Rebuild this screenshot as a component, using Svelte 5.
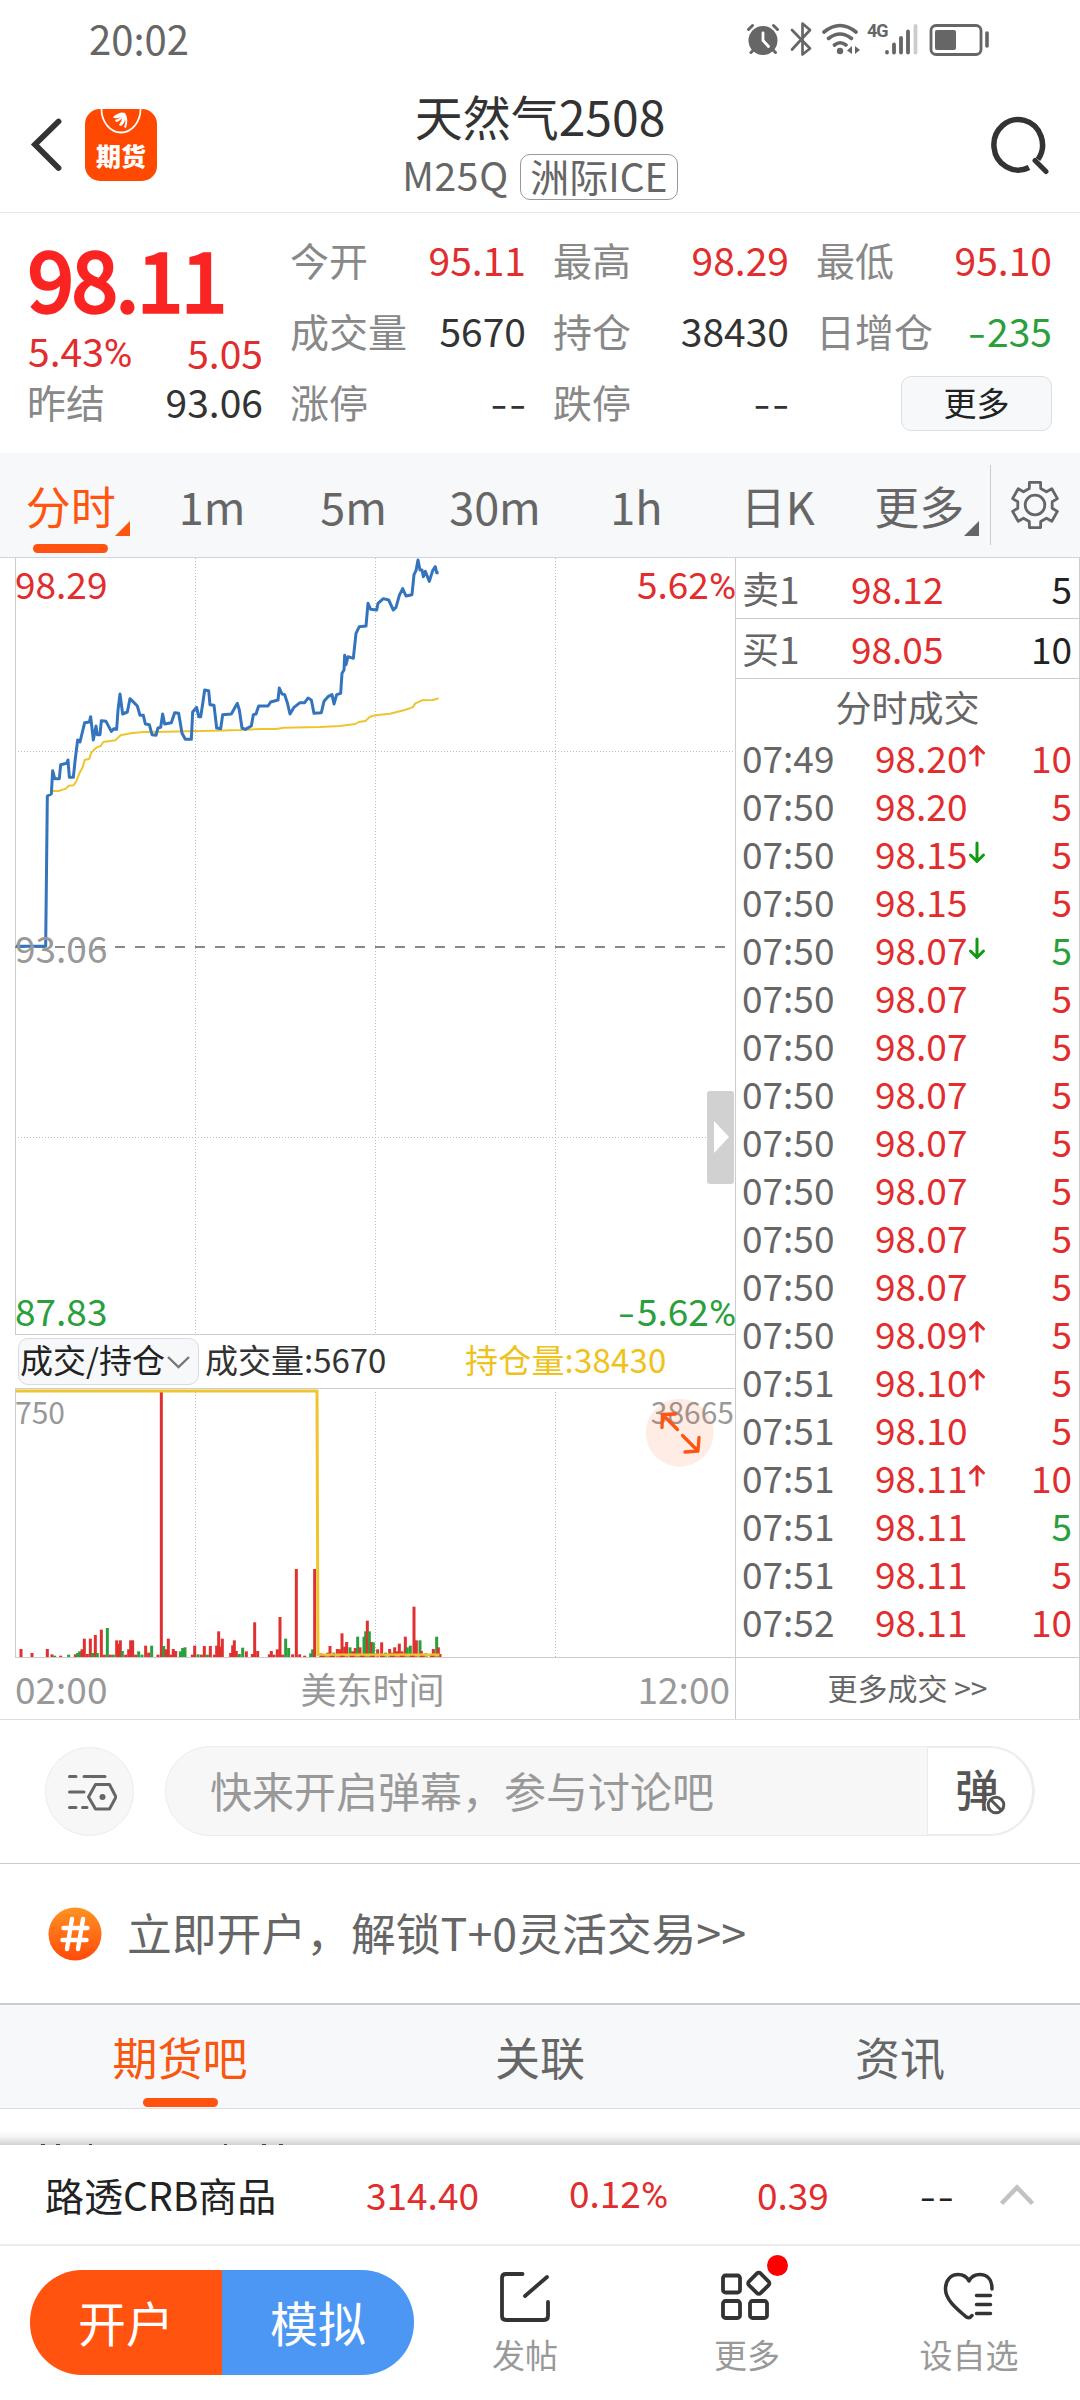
<script>
  const stats = [
    [
      { label: '今开', value: '95.11', tone: 'red' },
      { label: '成交量', value: '5670', tone: 'dark' },
      { label: '涨停', value: '--', tone: 'dark' }
    ],
    [
      { label: '最高', value: '98.29', tone: 'red' },
      { label: '持仓', value: '38430', tone: 'dark' },
      { label: '跌停', value: '--', tone: 'dark' }
    ],
    [
      { label: '最低', value: '95.10', tone: 'red' },
      { label: '日增仓', value: '235', negative: true, tone: 'green' }
    ]
  ];

  const periods = [
    { name: '分时', active: true, corner: true },
    { name: '1m' },
    { name: '5m' },
    { name: '30m' },
    { name: '1h' },
    { name: '日K' },
    { name: '更多', corner: true }
  ];

  const quotes = [
    { side: '卖1', price: '98.12', qty: '5' },
    { side: '买1', price: '98.05', qty: '10' }
  ];

  const trades = [
    ['07:49', '98.20', 'up', '10', 'red'],
    ['07:50', '98.20', '', '5', 'red'],
    ['07:50', '98.15', 'down', '5', 'red'],
    ['07:50', '98.15', '', '5', 'red'],
    ['07:50', '98.07', 'down', '5', 'green'],
    ['07:50', '98.07', '', '5', 'red'],
    ['07:50', '98.07', '', '5', 'red'],
    ['07:50', '98.07', '', '5', 'red'],
    ['07:50', '98.07', '', '5', 'red'],
    ['07:50', '98.07', '', '5', 'red'],
    ['07:50', '98.07', '', '5', 'red'],
    ['07:50', '98.07', '', '5', 'red'],
    ['07:50', '98.09', 'up', '5', 'red'],
    ['07:51', '98.10', 'up', '5', 'red'],
    ['07:51', '98.10', '', '5', 'red'],
    ['07:51', '98.11', 'up', '10', 'red'],
    ['07:51', '98.11', '', '5', 'green'],
    ['07:51', '98.11', '', '5', 'red'],
    ['07:52', '98.11', '', '10', 'red']
  ];

  // Chart series are kept in thirds of a pixel and scaled down in the SVG.
  const priceLine =
    '48,1219 137,1219 142,768 154,762 158,692 164,716 178,716 182,674 200,670 204,660 208,712 220,712 226,655 233,600 240,606 254,548 268,546 272,530 280,600 288,558 292,584 300,584 304,542 318,544 334,574 342,566 350,568 354,510 360,462 368,522 382,516 390,476 402,488 412,498 420,526 430,526 436,552 448,554 456,584 468,586 474,564 482,562 488,522 494,552 514,548 524,518 536,520 546,580 556,598 574,598 578,516 590,502 596,530 602,530 608,492 614,450 626,452 630,494 642,496 650,564 662,566 668,524 694,522 712,490 718,510 726,564 736,568 754,558 760,524 768,522 776,498 804,498 812,486 834,480 838,444 846,462 854,464 862,488 870,522 882,502 900,488 914,488 924,474 934,480 942,520 964,518 972,484 984,470 996,464 1002,492 1010,464 1022,460 1026,400 1032,390 1034,346 1038,374 1044,350 1060,355 1068,280 1078,260 1098,258 1104,190 1112,208 1130,210 1134,190 1150,176 1166,180 1180,210 1188,202 1198,166 1208,146 1218,168 1236,164 1242,104 1248,92 1254,60 1260,90 1266,90 1270,110 1276,94 1288,124 1298,92 1306,80 1310,98 1316,98';
  const averageLine =
    '158,753 176,753 198,746 206,737 220,736 228,726 238,700 248,682 254,660 268,656 274,638 290,622 302,618 310,606 346,601 362,586 392,580 430,576 500,575 560,574 640,572 720,570 780,567 830,567 850,563 960,561 1020,558 1066,552 1076,546 1096,543 1110,530 1126,526 1170,521 1214,510 1238,502 1246,490 1266,481 1298,480 1316,475';

  // [x, top of bar, colour]
  const G = '#2a9f3c';
  const R = '#e03030';
  const volumes = [
    [63, 1107, R], [96, 1119, R], [142, 1107, R], [156, 1123, R], [164, 1127, G], [182, 1127, R], [206, 1124, G],
    [226, 1123, R], [233, 1119, G], [239, 1114, G], [246, 1108, R], [253, 1076, R], [262, 1122, R], [271, 1076, R], [278, 1119, G],
    [286, 1065, R], [292, 1119, G], [304, 1049, R], [313, 1124, R], [322, 1044, G], [331, 1124, R], [340, 1124, G], [350, 1081, R],
    [356, 1092, R], [361, 1081, R], [367, 1113, G], [377, 1124, R], [386, 1108, R], [392, 1081, R], [398, 1081, R], [407, 1124, R],
    [416, 1114, G], [426, 1124, G], [437, 1097, R], [446, 1118, R], [455, 1097, G], [474, 1124, R], [484, 336, R], [491, 1098, G],
    [498, 1108, R], [505, 1076, R], [513, 1124, R], [520, 1107, R], [527, 1113, R], [541, 1114, G], [548, 1104, G], [555, 1102, G],
    [577, 1124, R], [584, 1097, R], [594, 1123, G], [604, 1124, R], [613, 1098, R], [622, 1124, G], [631, 1098, R], [643, 1124, R],
    [650, 1097, R], [656, 1054, R], [662, 1100, R], [667, 1076, R], [692, 1119, R], [698, 1096, R], [703, 1081, R], [709, 1113, R],
    [718, 1122, G], [728, 1103, G], [739, 1114, R], [757, 1122, R], [764, 1027, R], [773, 1113, R], [808, 1123, R], [814, 1113, R],
    [822, 1124, R], [832, 1108, R], [840, 1011, R], [848, 1124, R], [857, 1076, G], [866, 1104, G], [878, 1123, R], [889, 867, R],
    [899, 1123, R], [914, 1127, R], [932, 1120, G], [938, 1108, G], [944, 867, R], [962, 1120, R], [974, 1122, R], [983, 1118, R],
    [990, 1098, R], [1001, 1118, G], [1012, 1107, R], [1020, 1108, R], [1026, 1060, R], [1034, 1100, R], [1040, 1086, R],
    [1050, 1102, G], [1058, 1114, R], [1066, 1104, R], [1073, 1070, G], [1080, 1102, R], [1092, 1070, G], [1097, 1054, G],
    [1102, 1022, R], [1108, 1054, G], [1114, 1086, R], [1120, 1087, G], [1133, 1108, R], [1145, 1087, R], [1157, 1118, G],
    [1169, 1107, R], [1176, 1118, G], [1184, 1102, R], [1190, 1114, R], [1198, 1091, R], [1206, 1114, R], [1216, 1070, R],
    [1222, 1102, G], [1231, 1097, G], [1242, 980, R], [1249, 1081, R], [1260, 1081, G], [1264, 1113, R], [1278, 1120, G],
    [1300, 1107, R], [1310, 1070, G], [1315, 1102, R], [1320, 1122, R]
  ];

  // Six-toothed outline centred on 0,0.
  const gear = Array.from({ length: 6 }, (_, k) => {
    const at = (deg, r) => {
      const a = ((k * 60 - 90 + deg) * Math.PI) / 180;
      return `${(Math.cos(a) * r).toFixed(1)} ${(Math.sin(a) * r).toFixed(1)}`;
    };
    return [at(-19, 17.5), at(-14, 23.3), at(14, 23.3), at(19, 17.5)].join(' L ');
  }).join(' L ');

  const boards = ['期货吧', '关联', '资讯'];
</script>

<div class="screen">
  <div class="status">
    <span class="clock">20:02</span>
    <svg class="sys" width="246" height="40" viewBox="745 20 246 40">
      <g fill="none" stroke="#666" stroke-linecap="round">
        <circle cx="763" cy="40.500" r="14.500" fill="#666" stroke="none" />
        <path d="M763 33v7.500l5.500 6" stroke="#fff" stroke-width="2.800" />
        <path d="M748.500 29.500l4-4M777.500 29.500l-4-4M751 52.500l3-3M775.500 52.500l-3-3" stroke-width="3" />
        <path d="M792 30l18 18.500l-7.500 6v-31l7.500 6.500l-18 19.500" stroke-width="2.700" stroke-linejoin="round" />
        <path d="M824 32q16-13 32 0M828.500 38.500q11.500-9 23 0M834.500 45q5.500-4.500 11.500 0" stroke-width="3.600" />
        <circle cx="840" cy="51" r="3.200" fill="#666" stroke="none" />
        <path d="M852 46v8l-5-3.500zM855 54v-8l5 4z" fill="#666" stroke="none" />
        <path d="M887 52v.5M894 44.500v8M901 38v14.500M908 31.500v21" stroke-width="3.800" />
        <path d="M915.500 26v26.500" stroke="#ccc" stroke-width="3.800" />
        <rect x="931" y="25.500" width="50" height="29" rx="5" stroke-width="2.800" />
        <rect x="935" y="30" width="21" height="20" rx="2" fill="#666" stroke="none" />
        <path d="M987 33v13" stroke-width="3.600" />
      </g>
      <text x="867" y="37" class="net">4G</text>
    </svg>
  </div>

  <header>
    <div class="lead">
      <svg width="34" height="56" viewBox="29 116 34 56">
        <path d="M58.500 121.500L35 144.500L58.500 168" fill="none" stroke="#333" stroke-width="5.800" stroke-linecap="round" stroke-linejoin="miter" />
      </svg>
      <div class="app">
        <svg width="72" height="30" viewBox="0 0 72 30">
          <path d="M16.500 0a19.500 23.500 0 0 0 39 0" fill="none" stroke="#fff" stroke-width="1.800" />
          <path d="M28 8q7-6 12-4q4 6 1 15l-2-1q2-5 1-8q0 4-4 7l-2-1q3-4 3-7q-3 4-6 4l-1-2q4-1 6-3q-4 2-7 1z" fill="#fff" />
        </svg>
        <span>期货</span>
      </div>
    </div>
    <div class="heading">
      <h1>天然气2508</h1>
      <div class="sub"><span class="code">M25Q</span><span class="venue">洲际ICE</span></div>
    </div>
    <svg class="search" width="60" height="60" viewBox="990 115 60 60">
      <path d="M1029 167.500A24.300 25.300 0 1 1 1038 159.500" fill="none" stroke="#333" stroke-width="5.500" />
      <path d="M1035 160.500L1046 171.500" stroke="#333" stroke-width="5" stroke-linecap="round" />
    </svg>
  </header>

  <section class="quote">
    <div class="main-quote">
      <div class="big">98.11</div>
      <div class="pair red change"><span>5.43<i class="pct">%</i></span><span>5.05</span></div>
      <div class="pair prev"><span class="label">昨结</span><span>93.06</span></div>
    </div>
    {#each stats as col, i}
      <div class="stat-col">
        {#each col as s}
          <div class="pair">
            <span class="label">{s.label}</span>
            <span class={s.tone} class:dashes={s.value === '--'}>{#if s.negative}<i class="minus">-</i>{/if}{s.value}</span>
          </div>
        {/each}
        {#if i === 2}
          <div class="pair more-cell"><button class="more">更多</button></div>
        {/if}
      </div>
    {/each}
  </section>

  <nav class="periods">
    {#each periods as p}
      <div class="period" class:active={p.active}>
        <span>{p.name}</span>
        {#if p.corner}<i class="corner"></i>{/if}
        {#if p.active}<i class="bar"></i>{/if}
      </div>
    {/each}
    <div class="settings">
      <svg width="54" height="54" viewBox="-27 -27 54 54">
        <path d="M {gear} Z" fill="none" stroke="#666" stroke-width="2.800" stroke-linejoin="round" />
        <circle r="9.800" fill="none" stroke="#666" stroke-width="2.800" />
      </svg>
    </div>
  </nav>

  <section class="market">
    <div class="charts">
      <div class="plot main-plot">
        <svg width="735" height="776" viewBox="0 558 735 776">
          <path d="M15.500 558V1334" stroke="#ccc" />
          <path
            d="M195.500 558V1334M375.500 558V1334M555.500 558V1334M18 751.500H735M18 1137.500H735"
            stroke="#bbb"
            stroke-dasharray="1 2"
          />
          <path d="M15 947H727" stroke="#888" stroke-width="2" stroke-dasharray="10 10" />
          <g transform="translate(0 540) scale(.33333)" fill="none" stroke-linejoin="round">
            <polyline points={averageLine} stroke="#eec52f" stroke-width="6" />
            <polyline points={priceLine} stroke="#3474bd" stroke-width="9" />
          </g>
          <rect x="707" y="1091" width="27" height="93" rx="3" fill="#ccc" opacity=".9" />
          <path d="M714 1121L729 1137L714 1153Z" fill="#fff" />
        </svg>
        <span class="tag top left red">98.29</span>
        <span class="tag top right red">5.62<i class="pct">%</i></span>
        <span class="tag mid left gray">93.06</span>
        <span class="tag bottom left green">87.83</span>
        <span class="tag bottom right green"><i class="minus">-</i>5.62<i class="pct">%</i></span>
      </div>

      <div class="indicator">
        <button class="picker">
          成交/持仓
          <svg width="24" height="16" viewBox="0 0 24 16"><path d="M2 3L12.500 13L23 3" fill="none" stroke="#777" stroke-width="2.400" /></svg>
        </button>
        <span class="vol">成交量:5670</span>
        <span class="oi">持仓量:38430</span>
      </div>

      <div class="plot volume-plot">
        <svg width="735" height="268" viewBox="0 1389 735 268">
          <path d="M15.500 1389V1657" stroke="#ccc" />
          <path d="M195.500 1392V1657M375.500 1392V1657M555.500 1392V1657" stroke="#bbb" stroke-dasharray="1 2" />
          <g transform="translate(0 1280) scale(.33333)">
            {#each volumes as [x, y, color]}
              <rect x={x - 4.5} {y} width="9" height={1133 - y} fill={color} />
            {/each}
            <path d="M48 333H951L954 1125H1318" fill="none" stroke="#eec52f" stroke-width="9" stroke-linejoin="round" />
            <path d="M960 1130H1310" fill="none" stroke="#e03030" stroke-width="5" stroke-dasharray="14 16" />
          </g>
        </svg>
        <span class="tag scale left gray">750</span>
        <span class="tag scale right gray">38665</span>
        <svg class="expand" width="70" height="70" viewBox="645 1398 70 70">
          <circle cx="679.700" cy="1432.700" r="34" fill="#ff5510" opacity=".11" />
          <g fill="none" stroke="#ff5510" stroke-width="3.300" stroke-linecap="round" stroke-linejoin="round">
            <path d="M687.500 1429.500L672.500 1414.500" transform="translate(-1 0)" stroke="none" />
            <path d="M677.500 1429.500L662.500 1414.500M662 1427.500L662.500 1414.500L675.500 1414" />
            <path d="M682.500 1435.500L698 1451M685 1452L698 1451L699 1437.500" />
          </g>
        </svg>
      </div>

      <div class="times"><span>02:00</span><span class="zone">美东时间</span><span>12:00</span></div>
    </div>

    <aside class="tape">
      {#each quotes as q}
        <div class="level"><span class="side">{q.side}</span><span class="red">{q.price}</span><span class="qty">{q.qty}</span></div>
      {/each}
      <div class="tape-title">分时成交</div>
      {#each trades as [time, price, dir, qty, tone]}
        <div class="trade">
          <span class="time">{time}</span>
          <span class="price red">{price}</span>
          <span class="dir">
            {#if dir}
              <svg class={dir} width="18" height="24" viewBox="0 0 18 24">
                <path d="M9 2.500V21M2.500 9L9 2.500L15.500 9" fill="none" stroke="currentColor" stroke-width="3" stroke-linecap="round" stroke-linejoin="round" />
              </svg>
            {/if}
          </span>
          <span class="qty {tone}">{qty}</span>
        </div>
      {/each}
      <div class="tape-more">更多成交 &gt;&gt;</div>
    </aside>
  </section>

  <section class="danmaku">
    <div class="round">
      <svg width="52" height="44" viewBox="65 1769 52 44">
        <g fill="none" stroke="#666" stroke-width="3" stroke-linecap="round">
          <path d="M69.500 1776.500H76M84 1776.500H105M69.500 1792H84M69.500 1807.500H76M82.500 1807.500H87" />
          <path d="M95.500 1784.500H109.500L116 1797L109.500 1809H95.500L88.500 1797Z" stroke-linejoin="round" />
        </g>
        <circle cx="102.500" cy="1797" r="3" fill="#666" />
      </svg>
    </div>
    <div class="field">
      <span>快来开启弹幕，参与讨论吧</span>
      <div class="toggle">
        <b>弹</b>
        <svg width="24" height="24" viewBox="0 0 24 24">
          <circle cx="12" cy="12" r="10.500" fill="#fff" />
          <circle cx="12" cy="12" r="7.800" fill="none" stroke="#555" stroke-width="3" />
          <path d="M6.500 6.500L17.500 17.500" stroke="#555" stroke-width="3" />
        </svg>
      </div>
    </div>
  </section>

  <section class="promo">
    <svg width="54" height="54" viewBox="0 0 54 54">
      <defs>
        <linearGradient id="ember" x1="0" y1="0" x2="0" y2="1">
          <stop offset="0" stop-color="#ff9322" />
          <stop offset="1" stop-color="#ff4a0a" />
        </linearGradient>
      </defs>
      <circle cx="27" cy="27" r="26.500" fill="url(#ember)" />
      <path d="M24 12L19 42M35 12L30 42M15.500 21H39.500M14.500 33H38.500" stroke="#fff" stroke-width="4.400" stroke-linecap="round" />
    </svg>
    <span>立即开户，解锁T+0灵活交易&gt;&gt;</span>
  </section>

  <nav class="boards">
    {#each boards as b, i}
      <div class="board" class:active={i === 0}><span>{b}</span>{#if i === 0}<i class="bar"></i>{/if}</div>
    {/each}
  </nav>

  <div class="peek">
    <svg width="300" height="2" viewBox="0 0 300 2">
      <path d="M41 1.500h4M56 1.500h4M89 1.500h3M224 1.500h3M262 1.500h4M279 1.500h4" stroke="#444" />
    </svg>
  </div>

  <section class="ticker">
    <span class="name">路透CRB商品</span>
    <span class="num red">314.40</span>
    <span class="num red">0.12<i class="pct">%</i></span>
    <span class="num red">0.39</span>
    <span class="num none">--</span>
    <svg width="38" height="26" viewBox="0 0 38 26"><path d="M3.500 21.500L19 5.500L34.500 21.500" fill="none" stroke="#c2c2c2" stroke-width="4.500" /></svg>
  </section>

  <footer>
    <div class="cta"><span class="open">开户</span><span class="demo">模拟</span></div>
    <div class="action">
      <svg width="56" height="56" viewBox="497 2269 56 56">
        <g fill="none" stroke="#333" stroke-width="3.800" stroke-linecap="round">
          <path d="M522.500 2274H506Q502 2274 502 2278V2316Q502 2320 506 2320H544Q548 2320 548 2316V2302" />
          <path d="M525 2296L547 2277" />
        </g>
      </svg>
      <span>发帖</span>
    </div>
    <div class="action">
      <svg width="56" height="56" viewBox="719 2269 56 56">
        <g fill="none" stroke="#333" stroke-width="3.800">
          <rect x="723" y="2275.500" width="17" height="17" rx="2.500" />
          <rect x="723" y="2301" width="17" height="17" rx="2.500" />
          <rect x="750" y="2301" width="17" height="17" rx="2.500" />
          <rect x="750.500" y="2275" width="16.500" height="16.500" rx="2.500" transform="rotate(45 758.700 2283.300)" />
        </g>
      </svg>
      <i class="dot"></i>
      <span>更多</span>
    </div>
    <div class="action">
      <svg width="56" height="56" viewBox="941 2269 56 56">
        <g fill="none" stroke="#333" stroke-width="3.500" stroke-linecap="round" stroke-linejoin="round">
          <path d="M992 2289C992 2278 986 2274.500 980 2274.500C974 2274.500 971 2277 969 2281C967 2277 964 2274.500 958 2274.500C951 2274.500 945.500 2280 945.500 2289C945.500 2300 957 2309 964.500 2315.500Q969 2320 972 2315.500" />
          <path d="M976.500 2295.500H990.500M976.500 2304.500H990.500M976.500 2313.500H990.500" />
        </g>
      </svg>
      <span>设自选</span>
    </div>
  </footer>
</div>

<style>
  :global(body) {
    background: #fff;
  }
  .screen {
    width: 1080px;
    height: 2400px;
    overflow: hidden;
    display: flex;
    flex-direction: column;
    background: #fff;
    color: #333;
    font-family: 'Noto Sans CJK SC', 'Noto Sans', sans-serif;
    font-size: 39px;
    line-height: 1;
  }
  .screen > :global(*) {
    flex: none;
    box-sizing: border-box;
  }
  span,
  h1 {
    white-space: nowrap;
  }
  svg {
    display: block;
    flex: none;
  }
  button {
    font: inherit;
    margin: 0;
    padding: 0;
  }
  .red {
    color: #e12d2d;
  }
  .green {
    color: #2a9f3c;
  }
  .gray {
    color: #999;
  }
  .dark {
    color: #333;
  }
  .pct {
    font-family: Roboto, sans-serif;
    font-style: normal;
    margin-right: -1px;
  }
  .minus {
    display: inline-block;
    font-style: normal;
    transform: scaleX(1.35);
    margin-right: 4px;
  }

  .status {
    height: 76px;
    padding: 0 89px 0 89px;
    display: flex;
    align-items: center;
    justify-content: space-between;
  }
  .clock {
    font-size: 40px;
    color: #666;
  }
  .sys {
    margin-top: 4px;
  }
  .net {
    font: bold 18px Roboto, sans-serif;
    fill: #666;
    letter-spacing: -1px;
  }

  header {
    height: 137px;
    border-bottom: 1px solid #e8e8e8;
    display: grid;
    grid-template-columns: 300px 1fr 300px;
  }
  .lead {
    display: flex;
    align-items: center;
    padding-left: 29px;
    gap: 22px;
  }
  .app {
    width: 72px;
    height: 72px;
    margin-top: 2px;
    border-radius: 15px;
    background: #ff4800;
    overflow: hidden;
    color: #fff;
    text-align: center;
    font-size: 25px;
    font-weight: 900;
  }
  .app span {
    display: block;
    line-height: 30px;
    margin-top: 1px;
  }
  .heading {
    display: flex;
    flex-direction: column;
    align-items: center;
    padding-top: 9px;
  }
  h1 {
    margin: 0;
    font-size: 48px;
    line-height: 61px;
    font-weight: 400;
  }
  .sub {
    margin-top: 8px;
    height: 46px;
    display: flex;
    gap: 11px;
    color: #666;
    line-height: 41px;
  }
  .code {
    letter-spacing: 0.7px;
  }
  .venue {
    box-sizing: border-box;
    height: 46px;
    width: 158px;
    text-align: center;
    line-height: 40px;
    border: 1px solid #999;
    border-radius: 10px;
  }
  .search {
    justify-self: end;
    align-self: center;
    margin-right: 30px;
    margin-top: 2px;
  }

  .quote {
    height: 240px;
    padding: 0 28px;
    display: grid;
    grid-template-columns: repeat(4, 235px);
    gap: 28px;
  }
  .main-quote {
    padding-top: 17px;
  }
  .big {
    height: 94px;
    line-height: 94px;
    font-size: 82px;
    color: #fa2423;
    -webkit-text-stroke: 3.5px #fa2423;
    letter-spacing: -1.5px;
  }
  .pair {
    display: flex;
    justify-content: space-between;
    align-items: center;
    height: 71px;
  }
  .change {
    height: 57px;
  }
  .prev {
    height: 41px;
  }
  .stat-col {
    padding-top: 11px;
  }
  .label {
    color: #888;
    margin-left: -1px;
  }
  .dashes {
    letter-spacing: 1.5px;
    margin-right: -2px;
    transform: scaleX(1.25);
    transform-origin: right;
  }
  .more-cell {
    justify-content: flex-end;
    padding-top: 2px;
  }
  .more {
    width: 151px;
    height: 55px;
    padding-bottom: 3px;
    border: 1px solid #dce0e4;
    border-radius: 10px;
    background: #f6f8fa;
    color: #222;
    font-size: 33px;
  }

  .periods {
    height: 104px;
    display: flex;
    background: #f6f8fa;
    color: #666;
    font-size: 45px;
  }
  .period {
    position: relative;
    flex: 1;
    display: flex;
    align-items: center;
    justify-content: center;
  }
  .active {
    color: #ff5510;
  }
  .corner {
    position: absolute;
    right: 11px;
    top: 68px;
    border-style: solid;
    border-width: 0 0 15px 15px;
    border-color: transparent transparent currentColor transparent;
  }
  .bar {
    position: absolute;
    left: 50%;
    bottom: 4px;
    width: 75px;
    height: 9px;
    margin-left: -37.5px;
    border-radius: 5px;
    background: #ff530f;
  }
  .settings {
    width: 90px;
    display: flex;
    align-items: center;
    justify-content: center;
    border-left: 1px solid #ccc;
    height: 80px;
    margin-top: 12px;
    box-sizing: border-box;
  }

  .market {
    height: 1163px;
    display: flex;
    border-top: 1px solid #cfd6dc;
    border-bottom: 1px solid #ddd;
    font-size: 37px;
  }
  .charts {
    width: 735px;
    flex: none;
  }
  .plot {
    position: relative;
    height: 776px;
  }
  .tag {
    position: absolute;
    line-height: 40px;
  }
  .left {
    left: 15px;
  }
  .right {
    right: 0;
  }
  .top {
    top: 5px;
  }
  .mid {
    top: 369px;
  }
  .bottom {
    top: 732px;
  }
  .indicator {
    box-sizing: border-box;
    height: 55px;
    margin-left: 15px;
    border: solid #ccc;
    border-width: 1px 0;
    display: flex;
    align-items: center;
    font-size: 33px;
  }
  .picker {
    box-sizing: border-box;
    width: 181px;
    height: 47px;
    margin: 0 6px 0 3px;
    padding: 0 0 4px 1px;
    display: flex;
    align-items: center;
    gap: 1px;
    border: 1px solid #d8dce2;
    border-radius: 10px;
    background: #f6f8fa;
    color: #222;
    white-space: nowrap;
  }
  .picker svg {
    margin-top: 4px;
  }
  .vol,
  .oi {
    padding-bottom: 4px;
  }
  .vol {
    width: 260px;
  }
  .oi {
    color: #efc21b;
    letter-spacing: 0.2px;
  }
  .volume-plot {
    height: 268px;
  }
  .scale {
    top: 2px;
    font-size: 30px;
  }
  .right.scale {
    right: 1px;
  }
  .expand {
    position: absolute;
    left: 645px;
    top: 9px;
  }
  .times {
    box-sizing: border-box;
    height: 62px;
    margin-left: 15px;
    padding: 0 5px 1px 0;
    border-top: 1px solid #ccc;
    display: flex;
    align-items: center;
    justify-content: space-between;
    color: #999;
  }
  .zone {
    font-size: 36px;
  }

  .tape {
    box-sizing: border-box;
    width: 345px;
    border: solid #ccc;
    border-width: 0 1px;
    display: flex;
    flex-direction: column;
  }
  .level {
    box-sizing: border-box;
    height: 60px;
    border-bottom: 1px solid #ccc;
    padding: 0 7px 0 6px;
    display: grid;
    grid-template-columns: 109px 1fr auto;
    align-items: center;
  }
  .level:first-child {
    height: 61px;
  }
  .side,
  .time,
  .tape-title,
  .tape-more {
    color: #666;
  }
  .level .qty {
    color: #222;
  }
  .tape-title {
    height: 54px;
    line-height: 54px;
    text-align: center;
    font-size: 36px;
  }
  .trade {
    height: 48px;
    padding: 0 7px 0 6px;
    display: grid;
    grid-template-columns: 133px 93px 30px 1fr;
    align-items: center;
  }
  .dir {
    padding-bottom: 3px;
  }
  .dir .up {
    color: #e12d2d;
  }
  .dir .down {
    color: #0f9a12;
    transform: rotate(180deg);
  }
  .trade .qty {
    text-align: right;
  }
  .tape-more {
    box-sizing: border-box;
    margin-top: auto;
    height: 62px;
    line-height: 58px;
    border-top: 1px solid #ccc;
    text-align: center;
    font-size: 30px;
  }

  .danmaku {
    height: 144px;
    padding: 0 45px 1px;
    display: flex;
    align-items: center;
    gap: 31px;
    border-bottom: 1px solid #ccc;
  }
  .round {
    box-sizing: border-box;
    width: 89px;
    height: 89px;
    border-radius: 50%;
    border: 1px solid #ececec;
    background: #f7f7f7;
    display: flex;
    align-items: center;
    justify-content: center;
    padding-left: 2px;
  }
  .field {
    box-sizing: border-box;
    flex: 1;
    height: 90px;
    border: 1px solid #ececec;
    border-radius: 45px;
    background: #f7f7f7;
    overflow: hidden;
    display: flex;
    align-items: center;
    justify-content: space-between;
    padding-left: 44px;
    color: #999;
    font-size: 42px;
  }
  .field > span {
    padding-bottom: 3px;
  }
  .toggle {
    position: relative;
    box-sizing: border-box;
    width: 107px;
    height: 88px;
    border: 1px solid #ececec;
    border-width: 1px 2px 1px 1px;
    border-radius: 0 44px 44px 0;
    background: #fff;
    color: #555;
    padding: 18px 0 0 27px;
    font-size: 44px;
  }
  .toggle b {
    font-weight: 500;
  }
  .toggle svg {
    position: absolute;
    left: 56px;
    top: 45px;
  }

  .promo {
    height: 139px;
    padding-left: 48px;
    display: flex;
    align-items: center;
    gap: 25px;
    color: #666;
    font-size: 44.8px;
  }
  .promo span {
    padding-bottom: 3px;
  }

  .boards {
    height: 106px;
    border-top: 2px solid #ccc;
    border-bottom: 1px solid #ddd;
    background: #f6f8fa;
    display: flex;
    font-size: 45px;
    color: #666;
  }
  .board {
    position: relative;
    flex: 1;
    display: flex;
    align-items: center;
    justify-content: center;
  }
  .board.active {
    color: #f9560f;
  }
  .boards .bar {
    bottom: 1px;
  }

  .peek {
    height: 36px;
    display: flex;
    align-items: flex-end;
    background: linear-gradient(#fff 22px, #f4f4f4 28px, #d2d2d2);
  }

  .ticker {
    height: 101px;
    padding: 0 42px 0 45px;
    border-bottom: 2px solid #ececec;
    display: grid;
    grid-template-columns: 321px 203px 188px 159px 82px 1fr;
    align-items: center;
    color: #222;
  }
  .num {
    font-size: 37px;
  }
  .none {
    letter-spacing: 1.5px;
    padding-left: 3px;
    transform: scaleX(1.25);
    transform-origin: left;
  }
  .ticker span {
    padding-bottom: 1px;
  }

  footer {
    flex: 1;
    display: flex;
    padding-left: 30px;
  }
  .cta {
    display: flex;
    width: 384px;
    height: 105px;
    margin-top: 24px;
    border-radius: 52px;
    overflow: hidden;
    color: #fff;
    font-size: 48px;
    line-height: 102px;
    text-align: center;
  }
  .cta span {
    flex: 1;
  }
  .open {
    background: #ff530f;
  }
  .demo {
    background: #4c97f3;
  }
  .action {
    position: relative;
    flex: 1;
    display: flex;
    flex-direction: column;
    align-items: center;
    padding-top: 23px;
    color: #999;
    font-size: 33px;
    line-height: 40px;
  }
  .action span {
    margin-top: 9px;
  }
  .dot {
    position: absolute;
    left: 131px;
    top: 9px;
    width: 21px;
    height: 21px;
    border-radius: 50%;
    background: #f00;
  }
</style>
